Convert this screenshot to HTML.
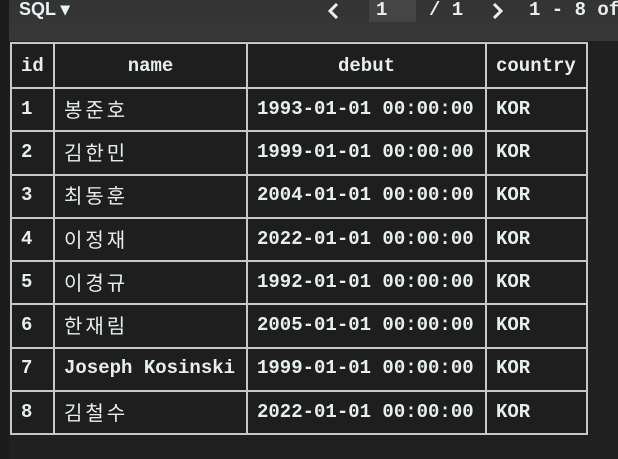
<!DOCTYPE html><html><head><style>
body{margin:0;width:618px;height:459px;background:#202020;overflow:hidden;position:relative;font-family:"Liberation Mono",monospace;color:#e6eeee}
.strip{position:absolute;left:0;top:0;width:9px;height:459px;background:#1c1c1c}
.bar{position:absolute;left:9px;top:0;width:609px;height:41px;background:linear-gradient(#333,#383838)}
.sql{position:absolute;left:10px;top:-1px;font:bold 18px "Liberation Sans",sans-serif;color:#e8f4f4}
.t{position:absolute;top:-1px;font:bold 19px "Liberation Mono",monospace;color:#e8eeee;white-space:pre}
.inp{position:absolute;left:360px;top:0;width:47px;height:22px;background:#454545}
table{position:absolute;left:10px;top:42px;border-collapse:collapse;background:#1e1e1e;table-layout:fixed;width:576px}
td,th{border:2px solid #c8c8c8;padding:0 0 2px 9px;font:bold 19px "Liberation Mono",monospace;color:#e6eeee;text-align:left;white-space:nowrap;vertical-align:middle;line-height:20px;overflow:hidden}
tr{height:43.3px}
tr:first-child{height:45px}
th{text-align:center;padding:0}
th:first-child{text-align:left;padding-left:9px}
th:last-child{text-align:left;padding-left:9px}
.k{font:20px "Noto Sans CJK KR",sans-serif;letter-spacing:3px;font-weight:normal;line-height:20px}
</style></head><body>
<div class="strip"></div><div class="bar">
<div class="sql">SQL ▾</div>
<div class="inp"></div>
<svg style="position:absolute;left:318px;top:3px" width="14" height="16"><path d="M10 1 L3 8 L10 15" stroke="#eee" stroke-width="3" fill="none"/></svg>
<div class="t" style="left:367px">1</div>
<div class="t" style="left:420px">/ 1</div>
<svg style="position:absolute;left:482px;top:3px" width="14" height="16"><path d="M3 1 L10 8 L3 15" stroke="#eee" stroke-width="3" fill="none"/></svg>
<div class="t" style="left:520px">1 - 8 of</div>
</div>
<table>
<colgroup><col style="width:43px"><col style="width:193px"><col style="width:239px"><col style="width:101px"></colgroup>
<tr><th>id</th><th>name</th><th>debut</th><th>country</th></tr>
<tr><td>1</td><td class="k">봉준호</td><td>1993-01-01 00:00:00</td><td>KOR</td></tr>
<tr><td>2</td><td class="k">김한민</td><td>1999-01-01 00:00:00</td><td>KOR</td></tr>
<tr><td>3</td><td class="k">최동훈</td><td>2004-01-01 00:00:00</td><td>KOR</td></tr>
<tr><td>4</td><td class="k">이정재</td><td>2022-01-01 00:00:00</td><td>KOR</td></tr>
<tr><td>5</td><td class="k">이경규</td><td>1992-01-01 00:00:00</td><td>KOR</td></tr>
<tr><td>6</td><td class="k">한재림</td><td>2005-01-01 00:00:00</td><td>KOR</td></tr>
<tr><td>7</td><td>Joseph Kosinski</td><td>1999-01-01 00:00:00</td><td>KOR</td></tr>
<tr><td>8</td><td class="k">김철수</td><td>2022-01-01 00:00:00</td><td>KOR</td></tr>
</table>
</body></html>
